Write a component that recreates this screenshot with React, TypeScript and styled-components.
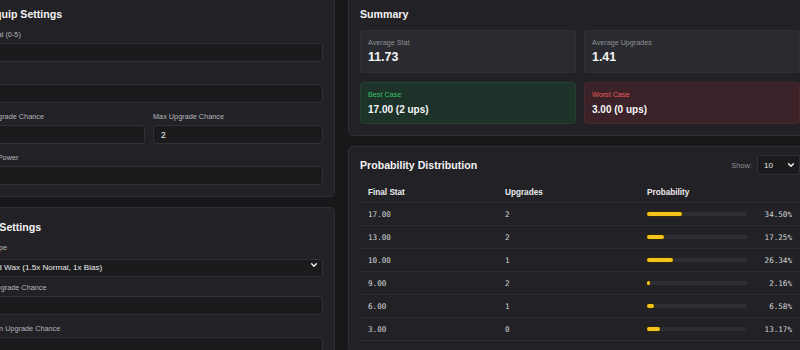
import React from 'react';
import styled, { createGlobalStyle } from 'styled-components';

const GlobalStyle = createGlobalStyle`
  body {
    margin: 0;
    background: #18181b;
    overflow: hidden;
    font-family: "Liberation Sans", Arial, sans-serif;
    color: #e6e6e8;
  }
  * { box-sizing: border-box; }
`;

const Layout = styled.div`
  display: grid;
  grid-template-columns: 372px 464px;
  column-gap: 13px;
  align-items: start;
  margin: -6px 0 0 -37px;
`;

const Column = styled.div`
  display: flex;
  flex-direction: column;
  gap: 10px;
`;

const Panel = styled.section`
  background: #222226;
  border: 1px solid #2e2f33;
  border-radius: 5px;
  padding: 12px 11px 11px;
`;

const PanelHead = styled.div`
  display: flex;
  align-items: center;
  justify-content: space-between;
  height: 14px;
  margin-bottom: 9px;
`;

const Title = styled.h2`
  margin: 0;
  font-size: 10.6px;
  line-height: 14px;
  font-weight: 700;
  color: #f2f2f3;
`;

const Fields = styled.div`
  display: flex;
  flex-direction: column;
  gap: 9px;
`;

const Pair = styled.div`
  display: grid;
  grid-template-columns: 1fr 1fr;
  gap: 8px;
`;

const Field = styled.label`
  display: flex;
  flex-direction: column;
  gap: 3px;
`;

const Label = styled.span`
  font-size: 7.3px;
  line-height: 10px;
  color: #b4b5ba;
  white-space: nowrap;
`;

const Input = styled.input`
  height: 19px;
  width: 100%;
  background: #1b1b1e;
  border: 1px solid #303136;
  border-radius: 3px;
  padding: 0 7px;
  font: 8.5px "Liberation Sans", Arial, sans-serif;
  color: #f0f0f0;
  outline: none;
`;

const SelectWrap = styled.div<{ $h: number; $w?: number }>`
  position: relative;
  height: ${(p) => p.$h}px;
  width: ${(p) => (p.$w ? `${p.$w}px` : 'auto')};

  svg {
    position: absolute;
    right: 5px;
    top: 50%;
    transform: translateY(-50%);
    pointer-events: none;
  }
`;

const Select = styled.select`
  appearance: none;
  width: 100%;
  height: 100%;
  background: #1b1b1e;
  border: 1px solid #303136;
  border-radius: 3px;
  padding: 0 6px;
  font: 8.1px "Liberation Sans", Arial, sans-serif;
  color: #ececee;
  outline: none;
`;

const Chevron = () => (
  <svg width="8" height="8" viewBox="0 0 10 10">
    <path d="M2 3.5l3 3 3-3" fill="none" stroke="#f2f2f2" strokeWidth="1.8" strokeLinecap="round" strokeLinejoin="round" />
  </svg>
);

const StatGrid = styled.div`
  display: grid;
  grid-template-columns: 1fr 1fr;
  gap: 9px 8px;
`;

const tones = {
  plain: { bg: '#2a2b31', border: '#303138', label: '#8f9096' },
  good: { bg: '#1d3329', border: '#24402f', label: '#37c26a' },
  bad: { bg: '#3a2228', border: '#47282f', label: '#ee5b5b' },
};

type Tone = keyof typeof tones;

const Card = styled.div<{ $tone: Tone }>`
  background: ${(p) => tones[p.$tone].bg};
  border: 1px solid ${(p) => tones[p.$tone].border};
  border-radius: 3px;
  padding: 7px 7px;
  height: ${(p) => (p.$tone === 'plain' ? 43 : 42)}px;
`;

const CardLabel = styled.div<{ $tone: Tone }>`
  font-size: 7.2px;
  line-height: 9px;
  color: ${(p) => tones[p.$tone].label};
`;

const CardValue = styled.div<{ $big?: boolean }>`
  margin-top: ${(p) => (p.$big ? 3 : 4)}px;
  font-size: ${(p) => (p.$big ? 12.4 : 10)}px;
  line-height: ${(p) => (p.$big ? 15 : 13)}px;
  font-weight: 700;
  color: #f6f6f7;
`;

const Stat = ({ tone, label, value, big }: { tone: Tone; label: string; value: string; big?: boolean }) => (
  <Card $tone={tone}>
    <CardLabel $tone={tone}>{label}</CardLabel>
    <CardValue $big={big}>{value}</CardValue>
  </Card>
);

const Show = styled.div`
  display: flex;
  align-items: center;
  gap: 5px;
  font-size: 7.5px;
  color: #8c8d93;
`;

const DistHead = styled(PanelHead)`
  height: 20px;
  margin: -4px 0 8px;
`;

const Row = styled.div<{ $head?: boolean }>`
  display: grid;
  grid-template-columns: 137px 142px 1fr;
  align-items: center;
  height: ${(p) => (p.$head ? 20 : 23)}px;
  border-bottom: 1px solid #2d2e32;
  font-family: ${(p) => (p.$head ? '"Liberation Sans", Arial, sans-serif' : '"DejaVu Sans Mono", "Liberation Mono", monospace')};
  font-size: ${(p) => (p.$head ? 8.2 : 7.6)}px;
  font-weight: ${(p) => (p.$head ? 700 : 400)};
  color: ${(p) => (p.$head ? '#ececee' : '#d4d4d7')};
`;

const Cell = styled.div`
  padding: 0 8px;
  white-space: nowrap;
`;

const ProbCell = styled(Cell)`
  display: flex;
  align-items: center;
  justify-content: space-between;
`;

const Track = styled.div`
  width: 100px;
  height: 4px;
  border-radius: 2px;
  background: #2d2e33;
`;

const Fill = styled.div`
  height: 100%;
  min-width: 3px;
  border-radius: 2px;
  background: #f6c21c;
  box-shadow: 0 0 0 1px rgba(60, 45, 0, 0.6);
`;

const rows = [
  { stat: '17.00', ups: 2, pct: 34.5 },
  { stat: '13.00', ups: 2, pct: 17.25 },
  { stat: '10.00', ups: 1, pct: 26.34 },
  { stat: '9.00', ups: 2, pct: 2.16 },
  { stat: '6.00', ups: 1, pct: 6.58 },
  { stat: '3.00', ups: 0, pct: 13.17 },
];

export default function App() {
  return (
    <>
      <GlobalStyle />
      <Layout>
        <Column>
          <Panel>
            <PanelHead>
              <Title>⚙ Equip Settings</Title>
            </PanelHead>
            <Fields>
              <Field>
                <Label>Potential (0-5)</Label>
                <Input defaultValue="" />
              </Field>
              <Field>
                <Label>Stat</Label>
                <Input defaultValue="" />
              </Field>
              <Pair>
                <Field>
                  <Label>Min Upgrade Chance</Label>
                  <Input defaultValue="" />
                </Field>
                <Field>
                  <Label>Max Upgrade Chance</Label>
                  <Input defaultValue="2" />
                </Field>
              </Pair>
              <Field>
                <Label>Bonus Power</Label>
                <Input defaultValue="" />
              </Field>
            </Fields>
          </Panel>
          <Panel>
            <PanelHead>
              <Title>Wax Settings</Title>
            </PanelHead>
            <Fields>
              <Field>
                <Label>Wax Type</Label>
                <SelectWrap $h={18}>
                  <Select defaultValue="good">
                    <option value="good">Good Wax (1.5x Normal, 1x Bias)</option>
                  </Select>
                  <Chevron />
                </SelectWrap>
              </Field>
              <Field>
                <Label>Wax Upgrade Chance</Label>
                <Input defaultValue="" />
              </Field>
              <Field>
                <Label>Wax Min Upgrade Chance</Label>
                <Input defaultValue="" />
              </Field>
            </Fields>
          </Panel>
        </Column>

        <Column>
          <Panel>
            <PanelHead>
              <Title>Summary</Title>
            </PanelHead>
            <StatGrid>
              <Stat tone="plain" label="Average Stat" value="11.73" big />
              <Stat tone="plain" label="Average Upgrades" value="1.41" big />
              <Stat tone="good" label="Best Case" value="17.00 (2 ups)" />
              <Stat tone="bad" label="Worst Case" value="3.00 (0 ups)" />
            </StatGrid>
          </Panel>
          <Panel>
            <DistHead>
              <Title>Probability Distribution</Title>
              <Show>
                Show:
                <SelectWrap $h={20} $w={43}>
                  <Select defaultValue="10">
                    <option value="10">10</option>
                    <option value="25">25</option>
                  </Select>
                  <Chevron />
                </SelectWrap>
              </Show>
            </DistHead>
            <Row $head>
              <Cell>Final Stat</Cell>
              <Cell>Upgrades</Cell>
              <Cell>Probability</Cell>
            </Row>
            {rows.map((r) => (
              <Row key={r.stat}>
                <Cell>{r.stat}</Cell>
                <Cell>{r.ups}</Cell>
                <ProbCell>
                  <Track>
                    <Fill style={{ width: `${r.pct}%` }} />
                  </Track>
                  <span>{r.pct.toFixed(2)}%</span>
                </ProbCell>
              </Row>
            ))}
          </Panel>
        </Column>
      </Layout>
    </>
  );
}
